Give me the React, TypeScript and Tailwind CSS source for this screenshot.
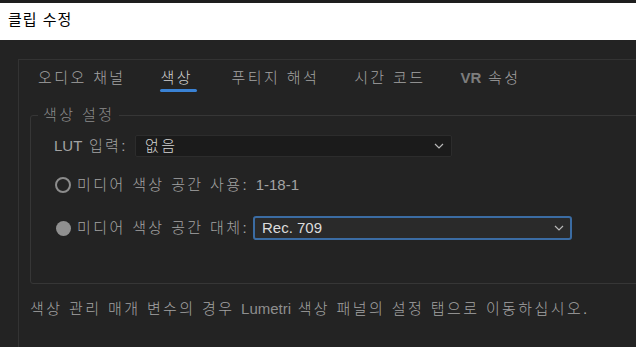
import React from "react";

const font = { fontFamily: '"Liberation Sans", "Noto Sans CJK KR", sans-serif' };

function Chevron() {
  return (
    <svg width="10" height="6" viewBox="0 0 10 6" className="block">
      <polyline points="1,1 5,5 9,1" fill="none" stroke="#b8b8b8" strokeWidth="1.2" />
    </svg>
  );
}

export default function App() {
  const tabs = ["오디오 채널", "색상", "푸티지 해석", "시간 코드", "VR 속성"];
  return (
    <div
      className="w-[636px] h-[347px] overflow-hidden bg-[#232323] text-[15px] leading-[20px] tracking-[2.4px] font-light"
      style={font}
    >
      <div className="h-[3px] bg-[#1e1e1e]" />
      <div className="h-[37px] bg-white flex items-center pl-[8px] pb-[4px] text-black tracking-[1px] font-normal">
        클립 수정
      </div>
      <div className="ml-[18px] mt-[19px] w-[700px] h-[400px] border-l border-t border-[#333333]">
        <div className="flex pl-[19px] pt-[8px] gap-[35px] text-[#a3a3a3]">
          {tabs.map((t) => (
            <div key={t} className="flex flex-col">
              <span className={t === "색상" ? "text-[#d2d2d2]" : ""}>
                {t === "VR 속성" ? (
                  <>
                    <span className="font-bold text-[#7d7d7d] tracking-normal">VR</span> 속성
                  </>
                ) : (
                  t
                )}
              </span>
              <div
                className={
                  "mt-[1px] h-[3px] rounded-full -ml-[1px] w-[37px] " +
                  (t === "색상" ? "bg-[#3a82d4]" : "bg-transparent")
                }
              />
            </div>
          ))}
        </div>
        <fieldset className="ml-[11px] mt-[13px] w-[700px] border border-[#363636] rounded-[3px]">
          <legend className="ml-[7px] px-[5px] text-[#8c8c8c]">색상 설정</legend>
          <div className="pl-[23px] pb-[43px]">
            <div className="mt-[10px] flex items-center text-[#a3a3a3]">
              <span className="w-[81px] whitespace-nowrap">
                <span className="tracking-normal font-normal">LUT</span> 입력:
              </span>
              <div className="w-[317px] h-[22px] bg-[#1b1b1b] border border-[#2c2c2c] rounded-[2px] flex items-center justify-between pl-[9px] pr-[7px] text-[#d4d4d4]">
                <span>없음</span>
                <Chevron />
              </div>
            </div>
            <div className="mt-[18px] h-[20px] flex items-center text-[#a3a3a3]">
              <div className="ml-[1px] w-[16px] h-[16px] rounded-full border-[2.5px] border-[#8c8c8c]" />
              <span className="ml-[6px] whitespace-nowrap">
                미디어 색상 공간 사용: <span className="tracking-normal font-normal">1-18-1</span>
              </span>
            </div>
            <div className="mt-[21px] flex items-center text-[#a3a3a3]">
              <div className="ml-[2px] w-[15px] h-[15px] rounded-full bg-[#909090]" />
              <span className="ml-[6px] w-[176px] whitespace-nowrap">미디어 색상 공간 대체:</span>
              <div className="w-[319px] h-[24px] bg-[#2a2a2a] border-2 border-[#3b6ca3] rounded-[3px] flex items-center justify-between pl-[7px] pr-[6px] text-[#dcdcdc] tracking-normal font-normal">
                <span>Rec. 709</span>
                <Chevron />
              </div>
            </div>
          </div>
        </fieldset>
        <div className="ml-[11px] mt-[15px] text-[#a3a3a3] whitespace-nowrap">
          색상 관리 매개 변수의 경우 <span className="tracking-normal text-[#8e8e8e] font-normal">Lumetri</span> 색상 패널의 설정 탭으로 이동하십시오.
        </div>
      </div>
    </div>
  );
}
